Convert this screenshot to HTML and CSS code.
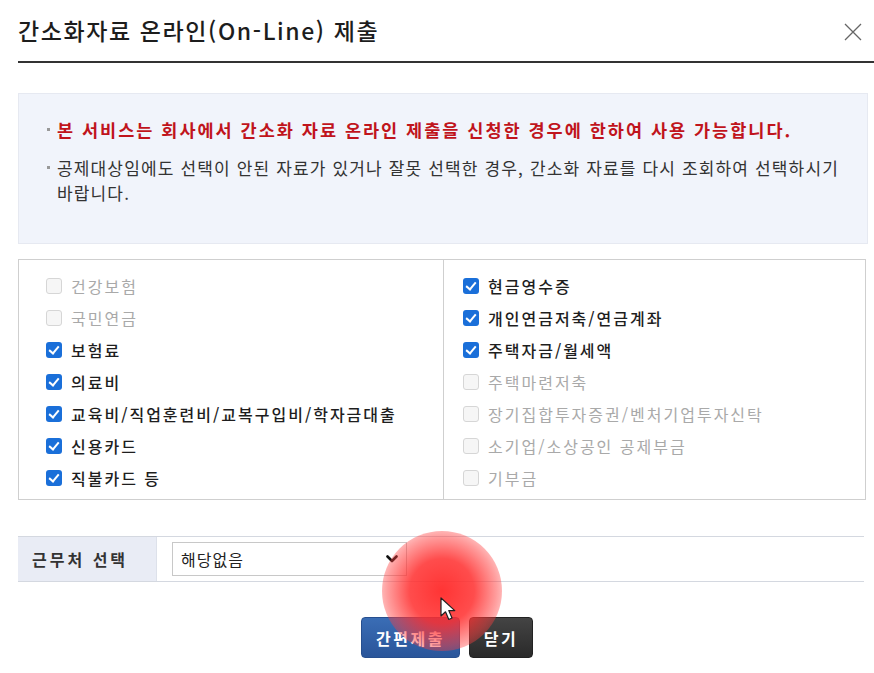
FILE: index.html
```html
<!DOCTYPE html>
<html lang="ko">
<head>
<meta charset="utf-8">
<title>간소화자료 온라인(On-Line) 제출</title>
<link rel="stylesheet" href="styles.css">
</head>
<body>
<div class="dialog">
  <header class="head">
    <h1 class="title">간소화자료 온라인(On-Line) 제출</h1>
    <button class="close" aria-label="닫기">
      <svg width="18" height="18" viewBox="0 0 18 18"><path d="M1 1 L17 17 M17 1 L1 17" stroke="#666" stroke-width="1.3" fill="none"/></svg>
    </button>
  </header>

  <section class="info">
    <p class="note red">본 서비스는 회사에서 간소화 자료 온라인 제출을 신청한 경우에 한하여 사용 가능합니다.</p>
    <p class="note">공제대상임에도 선택이 안된 자료가 있거나 잘못 선택한 경우, 간소화 자료를 다시 조회하여 선택하시기 바랍니다.</p>
  </section>

  <section class="checks">
    <ul class="col left">
      <li class="item off"><span class="box"></span>건강보험</li>
      <li class="item off"><span class="box"></span>국민연금</li>
      <li class="item on"><span class="box"></span>보험료</li>
      <li class="item on"><span class="box"></span>의료비</li>
      <li class="item on"><span class="box"></span>교육비/직업훈련비/교복구입비/학자금대출</li>
      <li class="item on"><span class="box"></span>신용카드</li>
      <li class="item on"><span class="box"></span>직불카드 등</li>
    </ul>
    <ul class="col right">
      <li class="item on"><span class="box"></span>현금영수증</li>
      <li class="item on"><span class="box"></span>개인연금저축/연금계좌</li>
      <li class="item on"><span class="box"></span>주택자금/월세액</li>
      <li class="item off"><span class="box"></span>주택마련저축</li>
      <li class="item off"><span class="box"></span>장기집합투자증권/벤처기업투자신탁</li>
      <li class="item off"><span class="box"></span>소기업/소상공인 공제부금</li>
      <li class="item off"><span class="box"></span>기부금</li>
    </ul>
  </section>

  <section class="workplace">
    <div class="wp-label">근무처 선택</div>
    <div class="wp-field">
      <div class="select">
        <span>해당없음</span>
        <svg width="12" height="8" viewBox="0 0 12 8"><path d="M1.5 1.5 L6 6 L10.5 1.5" stroke="#111" stroke-width="2.6" fill="none" stroke-linecap="round" stroke-linejoin="round"/></svg>
      </div>
    </div>
  </section>

  <div class="actions">
    <button class="btn primary">간편제출</button>
    <button class="btn dark">닫기</button>
  </div>

  <div class="clickmark"></div>
  <svg class="cursor" width="20" height="26" viewBox="0 0 20 26"><path d="M1 1 L1 19 L5.5 14.8 L8.8 22.5 L12 21 L8.8 13.6 L14.8 13.6 Z" fill="#fff" stroke="#222" stroke-width="1.2" stroke-linejoin="round"/></svg>
</div>
</body>
</html>
```

FILE: styles.css
```css
* { box-sizing: border-box; }
html, body { margin: 0; padding: 0; background: #fff; }
body {
  font-family: "Noto Sans CJK KR", "Noto Sans", sans-serif;
  color: #222;
  width: 874px;
  height: 673px;
  overflow: hidden;
}
.dialog {
  position: relative;
  padding: 0 0 0 18px;
  height: 673px;
}
.head {
  display: flex;
  align-items: center;
  justify-content: space-between;
  height: 63px;
  border-bottom: 2px solid #333;
  padding-right: 12px;
  padding-top: 3px;
}
.title {
  margin: 0;
  font-size: 23px;
  font-weight: 500;
  color: #1d1d1d;
  letter-spacing: 1.6px;
  padding-bottom: 4px;
}
.close {
  border: 0;
  background: none;
  padding: 0;
  display: flex;
}
.info {
  margin: 30px 6px 0 0;
  height: 151px;
  background: #f1f4fb;
  border: 1px solid #e6e9f1;
  padding: 23px 8px 0 28px;
}
.note {
  position: relative;
  margin: 0;
  padding-left: 10px;
  font-size: 17px;
  line-height: 25px;
  color: #333;
  letter-spacing: 1.15px;
}
.note::before {
  content: "";
  position: absolute;
  left: 0;
  top: 11px;
  width: 3px;
  height: 3px;
  background: #999;
}
.note.red {
  color: #c0141c;
  font-weight: 700;
  font-size: 17.5px;
  letter-spacing: 2px;
  margin-bottom: 13px;
}
.checks {
  display: flex;
  margin: 15px 8px 0 0;
  border: 1px solid #cfcfcf;
  height: 241px;
}
.col {
  list-style: none;
  margin: 0;
  padding: 10px 0 0 0;
  flex: 1;
}
.col.left { padding-left: 27px; border-right: 1px solid #cfcfcf; flex: 0 0 425px; }
.col.right { padding-left: 19px; }
.item {
  display: flex;
  align-items: center;
  height: 32px;
  font-size: 16px;
  letter-spacing: 2px;
}
.box {
  width: 16px;
  height: 16px;
  border-radius: 3px;
  margin-right: 9px;
  flex: none;
  position: relative;
}
.item.off { color: #a9a9a9; }
.item.off .box { border: 1px solid #d6d6d6; background: #f6f6f6; }
.item.on { color: #1e1e1e; font-weight: 500; }
.item.on .box { background: #1a6fd9; }
.item.on .box::after {
  content: "";
  position: absolute;
  left: 5px;
  top: 2px;
  width: 4px;
  height: 8px;
  border: solid #fff;
  border-width: 0 2px 2px 0;
  transform: rotate(40deg);
}
.workplace {
  display: flex;
  margin: 36px 10px 0 0;
  height: 46px;
  border-top: 1px solid #d4d8e0;
  border-bottom: 1px solid #d4d8e0;
}
.wp-label {
  width: 139px;
  background: #e9ecf5;
  border-right: 1px solid #dde1ea;
  font-size: 16px;
  font-weight: 700;
  color: #333;
  display: flex;
  align-items: center;
  padding-left: 14px;
  letter-spacing: 3px;
}
.wp-field {
  flex: 1;
  display: flex;
  align-items: center;
  padding-left: 15px;
}
.select {
  width: 235px;
  height: 34px;
  border: 1px solid #c8c8c8;
  background: #fff;
  display: flex;
  align-items: center;
  justify-content: space-between;
  padding: 0 8px 0 8px;
  font-size: 16px;
  letter-spacing: 1px;
  color: #222;
}
.actions {
  display: flex;
  justify-content: center;
  gap: 9px;
  margin-top: 35px;
  padding-left: 2px;
}
.btn {
  font-family: inherit;
  height: 41px;
  border-radius: 4px;
  font-size: 16px;
  font-weight: 700;
  color: #fff;
  padding: 0;
  letter-spacing: 2.5px;
  border: 1px solid transparent;
}
.btn.primary {
  width: 99px;
  background: linear-gradient(#3a6db5, #2a559a);
  border-color: #274f8f;
}
.btn.dark {
  width: 64px;
  background: linear-gradient(#444, #2a2a2a);
  border-color: #222;
}
.clickmark {
  position: absolute;
  left: 382px;
  top: 531px;
  width: 120px;
  height: 120px;
  border-radius: 50%;
  background: radial-gradient(circle, rgba(255,35,35,0.92) 0%, rgba(255,45,45,0.85) 38%, rgba(255,60,60,0.5) 64%, rgba(255,80,80,0.12) 86%, rgba(255,80,80,0) 100%);
  pointer-events: none;
}
.cursor {
  position: absolute;
  left: 440px;
  top: 597px;
}
```
